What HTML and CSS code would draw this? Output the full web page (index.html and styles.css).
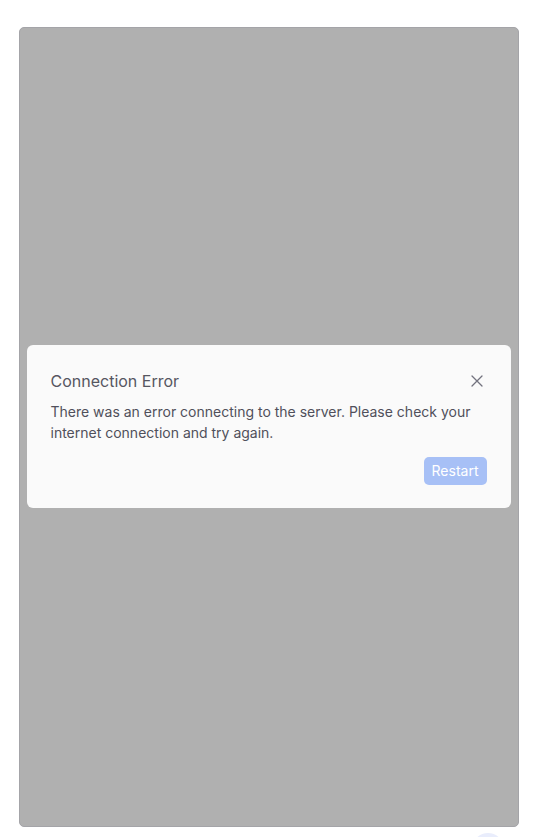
FILE: index.html
```html
<!DOCTYPE html>
<html lang="en">
<head>
<meta charset="utf-8">
<title>Connection Error</title>
<link rel="stylesheet" href="styles.css">
</head>
<body>
<div class="page">
  <div class="frame">
    <div class="modal" role="dialog" aria-labelledby="t">
      <div class="modal-head">
        <h2 class="title" id="t">Connection Error</h2>
        <button class="close" aria-label="Close">
          <svg width="12" height="12" viewBox="0 0 12 12" fill="none" stroke="#72727e" stroke-width="1.3" stroke-linecap="round"><path d="M1 1L11 11M11 1L1 11"/></svg>
        </button>
      </div>
      <p class="msg">There was an error connecting to the server. Please check your internet connection and try again.</p>
      <div class="actions">
        <button class="restart">Restart</button>
      </div>
    </div>
  </div>
  <div class="fab"></div>
</div>
</body>
</html>
```

FILE: styles.css
```css
* { box-sizing: border-box; }
html, body { margin: 0; padding: 0; background: #ffffff; }
body {
  font-family: Inter, "Noto Sans", "Liberation Sans", sans-serif;
  height: 837px;
  overflow: hidden;
}
.page {
  position: relative;
  padding-top: 27px;
  display: flex;
  justify-content: center;
}
.frame {
  width: 500px;
  height: 800px;
  background: #b0b0b0;
  border: 1px solid #a4a4a8;
  border-radius: 5px;
  display: flex;
  align-items: center;
  justify-content: center;
  padding: 0 7px 2px;
}
.modal {
  width: 100%;
  background: #fafafa;
  border-radius: 6px;
  padding: 24px 24px 23px;
  display: flex;
  flex-direction: column;
}
.modal-head {
  display: flex;
  align-items: center;
  justify-content: space-between;
  height: 24px;
}
.title {
  margin: 0;
  font-size: 16px;
  font-weight: 400;
  line-height: 24px;
  color: #565661;
}
.close {
  width: 20px;
  height: 20px;
  border: 0;
  padding: 0;
  background: transparent;
  display: flex;
  align-items: center;
  justify-content: center;
}
.msg {
  margin: 8px 0 0;
  font-size: 14px;
  line-height: 21px;
  color: #50505b;
}
.actions {
  display: flex;
  justify-content: flex-end;
  margin-top: 14px;
}
.restart {
  height: 28px;
  width: 63px;
  border: 0;
  border-radius: 5px;
  background: #a7c0f6;
  color: #ffffff;
  font-family: Inter, "Noto Sans", "Liberation Sans", sans-serif;
  font-size: 14px;
  padding: 0;
}
.fab {
  position: absolute;
  left: 472px;
  top: 833px;
  width: 32px;
  height: 32px;
  border-radius: 50%;
  background: #e9edfc;
}
```
